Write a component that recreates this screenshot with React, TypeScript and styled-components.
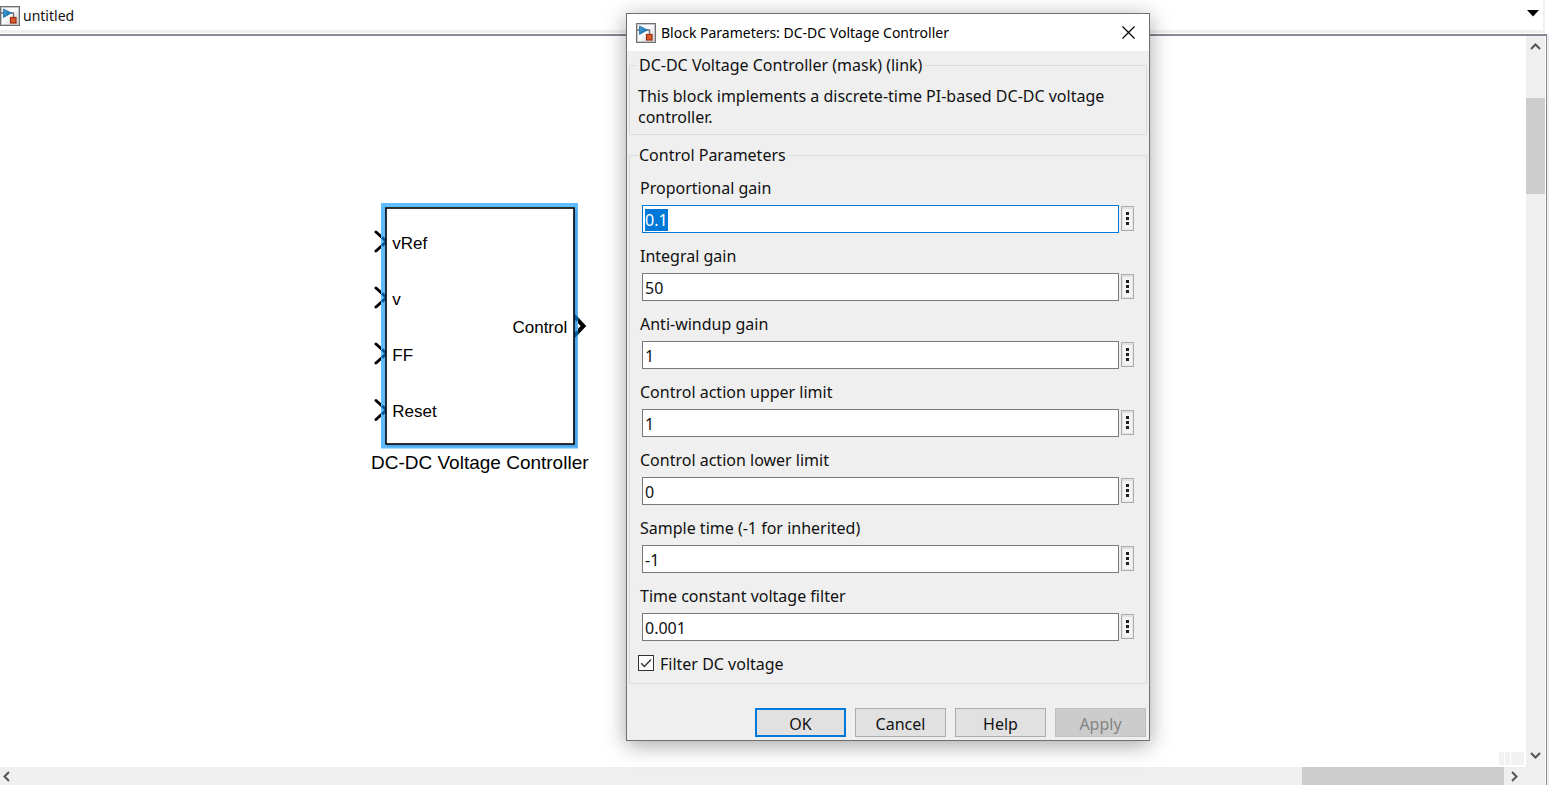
import React, { useEffect, useRef } from "react";
import styled, { createGlobalStyle } from "styled-components";

const GlobalStyle = createGlobalStyle`
  *, *::before, *::after { box-sizing: border-box; }
  body { margin: 0; background: #fff; color: #111; font-family: "Noto Sans", "Open Sans", sans-serif; }
  button, input { font: inherit; color: inherit; }
`;

const Page = styled.div`
  display: flex;
  flex-direction: column;
  height: 100vh;
  overflow: hidden;
  position: relative;
`;

const TabBar = styled.header`
  display: flex;
  align-items: center;
  justify-content: space-between;
  height: 34px;
  flex: none;
  margin-right: 4px;
  padding: 0 3px 2px 0;
  border-right: 2px solid #efefef;
  box-shadow: inset 0 -1px #fff, inset 0 -4px #efefef;
`;

const Tab = styled.div`
  display: flex;
  align-items: center;
  gap: 3px;
  font-size: 14px;
  line-height: 20px;
`;

const BareButton = styled.button`
  display: flex;
  align-items: center;
  justify-content: center;
  border: 0;
  padding: 0;
  background: transparent;
`;

const TabMenuButton = styled(BareButton)`
  width: 14px;
  height: 14px;
  margin-bottom: 6px;
`;

const Workspace = styled.main`
  display: flex;
  flex-direction: column;
  flex: 1;
  min-height: 0;
  margin-right: 2px;
  border-top: 2px solid #838892;
  border-right: 1px solid #838892;
  padding-right: 1px;
  box-shadow: 2px 0 #efefef;
`;

const Upper = styled.div`
  display: flex;
  flex: 1;
  min-height: 0;
`;

const Canvas = styled.section`
  position: relative;
  flex: 1;
  background: #fff;
`;

const VerticalBar = styled.div`
  display: flex;
  flex-direction: column;
  width: 19px;
  background: #efefef;
`;

const HorizontalBar = styled.div`
  display: flex;
  height: 18px;
  flex: none;
  padding-right: 19px;
  background: #efefef;
`;

const Track = styled.div<{ $vertical?: boolean }>`
  display: flex;
  flex-direction: ${(p) => (p.$vertical ? "column" : "row")};
  flex: 1;
`;

const Spacer = styled.div<{ $share: number }>`
  flex: ${(p) => p.$share} 0 0;
`;

const Thumb = styled.div<{ $share: number }>`
  flex: ${(p) => p.$share} 0 0;
  background: #cdcdcd;
`;

const ArrowButton = styled(BareButton)`
  width: 19px;
  height: 21px;
  flex: none;
`;

const EdgeArrow = styled(BareButton)`
  width: 13px;
  height: 18px;
  flex: none;
`;

const EndArrow = styled(BareButton)`
  width: 22px;
  height: 18px;
  flex: none;
`;

const StatusGrip = styled.div`
  position: absolute;
  right: 2px;
  bottom: 2px;
  display: flex;
  gap: 1px;
`;

const GripCell = styled.span<{ $wide?: boolean }>`
  width: ${(p) => (p.$wide ? 13 : 5)}px;
  height: 13px;
  background: #f2f2f2;
`;

const BlockNode = styled.figure`
  position: absolute;
  left: 371px;
  top: 167px;
  display: flex;
  flex-direction: column;
  align-items: center;
  margin: 0;
  font-family: "Liberation Sans", Arial, sans-serif;
  color: #000;
`;

const BlockShape = styled.div`
  position: relative;
  width: 197px;
  height: 246px;
`;

const BlockArt = styled.svg`
  position: absolute;
  left: -7px;
  top: 0;
  display: block;
`;

const BlockPorts = styled.div`
  position: relative;
  display: flex;
  justify-content: space-between;
  align-items: center;
  height: 100%;
  padding: 3px 11px 0;
  font-size: 17px;
  line-height: 20px;
`;

const Inputs = styled.div`
  display: flex;
  flex-direction: column;
  gap: 36px;
`;

const BlockName = styled.figcaption`
  margin-top: 3px;
  font-size: 19px;
  line-height: 22px;
  white-space: nowrap;
`;

const Dialog = styled.form`
  position: absolute;
  left: 626px;
  top: 13px;
  width: 524px;
  display: flex;
  flex-direction: column;
  border: 1px solid #6f6f6f;
  background: #efefef;
  box-shadow: 0 4px 20px rgba(0, 0, 0, 0.36);
`;

const TitleBar = styled.div`
  display: flex;
  align-items: center;
  height: 37px;
  padding: 0 11px 0 9px;
  gap: 5px;
  background: #fff;
`;

const Title = styled.h1`
  flex: 1;
  margin: 0;
  font-size: 14px;
  font-weight: 400;
  line-height: 20px;
  color: #000;
`;

const CloseButton = styled(BareButton)`
  width: 20px;
  height: 20px;
`;

const Body = styled.div`
  display: flex;
  flex-direction: column;
  gap: 9px;
  padding: 3px 2px 0;
  font-size: 16px;
  line-height: 22px;
`;

const Group = styled.fieldset`
  min-width: 0;
  margin: 0;
  padding: 0 12px 8px 8px;
  border: 1px solid #dcdcdc;
`;

const Legend = styled.legend`
  margin-left: -1px;
  padding: 0 3px 0 2px;
`;

const Description = styled.p`
  margin: 10px 0 -2px;
  line-height: 21px;
`;

const Rows = styled.div`
  display: flex;
  flex-direction: column;
  gap: 12px;
  padding: 11px 0 12px 2px;
`;

const Row = styled.div`
  display: flex;
  flex-direction: column;
  gap: 6px;
`;

const RowControls = styled.div`
  display: flex;
  align-items: flex-start;
  gap: 2px;
  padding-left: 2px;
`;

const Field = styled.input`
  flex: 1;
  min-width: 0;
  height: 28px;
  padding: 2px 2px 0;
  border: 1px solid #7a7a7a;
  border-radius: 0;
  outline: none;
  background: #fff;
  &:focus { border-color: #0078d7; }
  &::selection { background: #0078d7; color: #fff; }
`;

const MoreButton = styled(BareButton)`
  width: 13px;
  height: 25px;
  margin-top: 1px;
  border: 1px solid #adadad;
  background: #f4f4f4;
  box-shadow: inset 0 2px #e1e1e1, inset 0 0 0 1px #e6e6e6;
`;

const CheckLabel = styled.label`
  display: flex;
  align-items: center;
  gap: 6px;
`;

const Check = styled.input`
  appearance: none;
  width: 16px;
  height: 16px;
  margin: 0 0 2px;
  border: 1px solid #333;
  background: #fff;
  &:checked {
    background: #fff
      url("data:image/svg+xml,%3Csvg xmlns='http://www.w3.org/2000/svg' viewBox='0 0 14 14'%3E%3Cpath d='M2.2 7.2l3.2 3.3 6.6-7' fill='none' stroke='%23333' stroke-width='1.3'/%3E%3C/svg%3E");
  }
`;

const Footer = styled.div`
  display: flex;
  justify-content: flex-end;
  gap: 9px;
  padding: 24px 3px 3px;
  font-size: 16px;
`;

const ActionButton = styled.button<{ $primary?: boolean }>`
  width: 91px;
  height: 29px;
  padding: 2px 0 0;
  border: ${(p) => (p.$primary ? "2px solid #0078d7" : "1px solid #adadad")};
  background: #e1e1e1;
  line-height: 22px;
  display: flex;
  align-items: center;
  justify-content: center;
  &:disabled { background: #cccccc; border-color: #bfbfbf; color: #838383; }
`;

const ModelIcon = () => (
  <svg width="20" height="20" viewBox="0 0 20 20" aria-hidden="true">
    <defs>
      <linearGradient id="plate" x1="0" y1="0" x2="1" y2="1">
        <stop offset="0" stopColor="#f2f3f5" />
        <stop offset="0.45" stopColor="#fff" />
        <stop offset="1" stopColor="#bfc2c8" />
      </linearGradient>
      <linearGradient id="gain" x1="0" y1="0" x2="1" y2="1">
        <stop offset="0" stopColor="#4aa6dc" />
        <stop offset="1" stopColor="#12629c" />
      </linearGradient>
    </defs>
    <rect x="0.5" y="0.5" width="19" height="19" fill="url(#plate)" stroke="#707070" />
    <rect x="1.5" y="1.5" width="17" height="17" fill="none" stroke="#c4c6c9" />
    <path d="M1 7h3M11 7h2.500V12" fill="none" stroke="#6b6f75" strokeWidth="1.400" />
    <path d="M3.500 3L11.500 7 3.500 11.500z" fill="url(#gain)" stroke="#1b6da6" strokeWidth="0.8" />
    <rect x="10.500" y="11.500" width="5.500" height="5.500" fill="#dd5a2c" stroke="#9c3010" strokeWidth="1.200" />
  </svg>
);

const Chevron = ({ d }: { d: string }) => (
  <svg width="11" height="11" viewBox="0 0 11 11" aria-hidden="true">
    <path d={d} fill="none" stroke="#555" strokeWidth="2" />
  </svg>
);

const params = [
  ["kp", "Proportional gain", "0.1"],
  ["ki", "Integral gain", "50"],
  ["kaw", "Anti-windup gain", "1"],
  ["upper", "Control action upper limit", "1"],
  ["lower", "Control action lower limit", "0"],
  ["ts", "Sample time (-1 for inherited)", "-1"],
  ["tau", "Time constant voltage filter", "0.001"],
];

const portYs = [38.5, 94.5, 150.5, 207];

export default function App() {
  const first = useRef<HTMLInputElement>(null);
  useEffect(() => {
    first.current?.focus();
    first.current?.select();
  }, []);

  return (
    <>
      <GlobalStyle />
      <Page>
        <TabBar>
          <Tab><ModelIcon />untitled</Tab>
          <TabMenuButton aria-label="Open documents">
            <svg width="12" height="7" viewBox="0 0 12 7"><path d="M0 0h12L6 6.5z" fill="#000" /></svg>
          </TabMenuButton>
        </TabBar>
        <Workspace>
          <Upper>
            <Canvas>
              <BlockNode>
                <BlockShape>
                  <BlockArt width="214" height="246" viewBox="0 0 214 246">
                    {portYs.map((y) => (
                      <path key={y} d={`M2 ${y - 9.5}L12.5 ${y}L2 ${y + 9.5}`} fill="none" stroke="#000" strokeWidth="3" strokeLinecap="round" />
                    ))}
                    <path d="M200 113L209.5 123L200 133" fill="none" stroke="#000" strokeWidth="4" />
                    <path d="M7 0H204V245.500H7Z M12 4.500V241.500H200V4.500Z" fillRule="evenodd" fill="#5fbcff" />
                    <path d="M200 6.500h3v237.500h-190v-3h187z" fill="#3f92cf" opacity="0.5" />
                    {portYs.map((y) => (
                      <path key={y} d={`M8 ${y - 4.1}L12.5 ${y}L8 ${y + 4.1}`} fill="none" stroke="#005a96" strokeWidth="3" />
                    ))}
                    <path d="M200 113L204 117.200M200 133L204 128.800" stroke="#005a96" strokeWidth="4" />
                    <rect x="12" y="5" width="188" height="236" fill="#fff" stroke="#000" strokeWidth="1.6" />
                  </BlockArt>
                  <BlockPorts>
                    <Inputs><span>vRef</span><span>v</span><span>FF</span><span>Reset</span></Inputs>
                    <span>Control</span>
                  </BlockPorts>
                </BlockShape>
                <BlockName>DC-DC Voltage Controller</BlockName>
              </BlockNode>
              <StatusGrip><GripCell /><GripCell /><GripCell $wide /></StatusGrip>
            </Canvas>
            <VerticalBar>
              <ArrowButton aria-label="Scroll up"><Chevron d="M1 8L5.500 3.500L10 8" /></ArrowButton>
              <Track $vertical>
                <Spacer $share={41} /><Thumb $share={96} /><Spacer $share={550} />
              </Track>
              <ArrowButton aria-label="Scroll down"><Chevron d="M1 2L5.500 6.500L10 2" /></ArrowButton>
            </VerticalBar>
          </Upper>
          <HorizontalBar>
            <EdgeArrow aria-label="Scroll left"><Chevron d="M8 1L3.500 5.500L8 10" /></EdgeArrow>
            <Track><Spacer $share={1289} /><Thumb $share={202} /></Track>
            <EndArrow aria-label="Scroll right"><Chevron d="M2 1L6.500 5.500L2 10" /></EndArrow>
          </HorizontalBar>
        </Workspace>

        <Dialog role="dialog" aria-labelledby="dialog-title" onSubmit={(e) => e.preventDefault()}>
          <TitleBar>
            <ModelIcon />
            <Title id="dialog-title">Block Parameters: DC-DC Voltage Controller</Title>
            <CloseButton type="button" aria-label="Close">
              <svg width="13" height="13" viewBox="0 0 13 13"><path d="M0.500 0.500l12 12M12.500 0.500l-12 12" stroke="#000" strokeWidth="1.200" /></svg>
            </CloseButton>
          </TitleBar>
          <Body>
            <Group>
              <Legend>DC-DC Voltage Controller (mask) (link)</Legend>
              <Description>This block implements a discrete-time PI-based DC-DC voltage controller.</Description>
            </Group>
            <Group>
              <Legend>Control Parameters</Legend>
              <Rows>
                {params.map(([id, label, value], i) => (
                  <Row key={id}>
                    <label htmlFor={id}>{label}</label>
                    <RowControls>
                      <Field id={id} type="text" defaultValue={value} ref={i === 0 ? first : undefined} />
                      <MoreButton type="button" aria-label={`${label} options`}>
                        <svg width="3" height="13" viewBox="0 0 3 13"><path d="M0 0h3v3H0zM0 5h3v3H0zM0 10h3v3H0z" fill="#222" /></svg>
                      </MoreButton>
                    </RowControls>
                  </Row>
                ))}
              </Rows>
              <CheckLabel><Check type="checkbox" defaultChecked />Filter DC voltage</CheckLabel>
            </Group>
          </Body>
          <Footer>
            <ActionButton type="submit" $primary>OK</ActionButton>
            <ActionButton type="button">Cancel</ActionButton>
            <ActionButton type="button">Help</ActionButton>
            <ActionButton type="button" disabled>Apply</ActionButton>
          </Footer>
        </Dialog>
      </Page>
    </>
  );
}
